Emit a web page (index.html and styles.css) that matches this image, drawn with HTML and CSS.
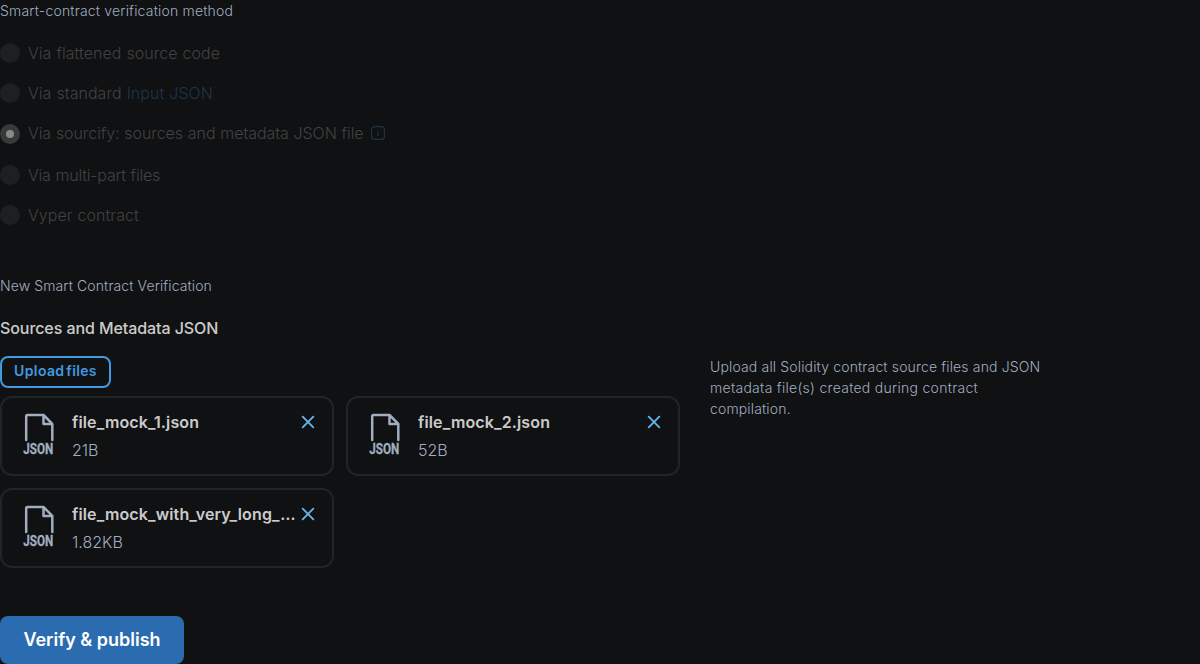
FILE: index.html
```html
<!DOCTYPE html>
<html lang="en">
<head>
<meta charset="utf-8">
<title>New Smart Contract Verification</title>
<link rel="stylesheet" href="styles.css">
</head>
<body>
<svg class="sprite" aria-hidden="true">
  <symbol id="json" viewBox="0 0 40 48">
    <path d="M6.200 32V8.300Q6.200 7 7.500 7H23.500L32.300 15.800V32M23.500 7.500V16H32" fill="none" stroke="currentColor" stroke-width="2.500" stroke-linecap="round" stroke-linejoin="round"/>
    <text class="json-text" x="3.200" y="46" textLength="30" lengthAdjust="spacingAndGlyphs">JSON</text>
  </symbol>
  <symbol id="cross" viewBox="0 0 20 20">
    <path d="M4.700 4.700L15.300 15.300M15.300 4.700L4.700 15.300" fill="none" stroke="currentColor" stroke-width="1.900" stroke-linecap="round"/>
  </symbol>
</svg>
<form class="page">
  <div class="caption">Smart-contract verification method</div>
  <div class="methods">
    <div class="method"><span class="radio"></span><span class="label">Via flattened source code</span></div>
    <div class="method"><span class="radio"></span><span class="label">Via standard <span class="link">Input JSON</span></span></div>
    <div class="method info-row"><span class="radio checked"></span><span class="label">Via sourcify: sources and metadata JSON file</span>
      <svg class="info" viewBox="0 0 14 14"><rect x=".6" y=".6" width="12.800" height="12.800" rx="3" fill="none" stroke="currentColor" stroke-width="1.200"/><path d="M7 4.200V5.200M7 6.200V10" stroke="currentColor" stroke-width="1.100"/></svg>
    </div>
    <div class="method"><span class="radio"></span><span class="label tight">Via multi-part files</span></div>
    <div class="method"><span class="radio"></span><span class="label">Vyper contract</span></div>
  </div>
  <div class="caption section">New Smart Contract Verification</div>
  <div class="heading">Sources and Metadata JSON</div>
  <div class="columns">
    <div class="files-col">
      <button type="button" class="upload">Upload files</button>
      <div class="files">
        <div class="file"><svg class="file-icon"><use href="#json"/></svg><div class="file-body"><div class="file-head"><span class="name">file_mock_1.json</span><svg class="close"><use href="#cross"/></svg></div><div class="size">21B</div></div></div>
        <div class="file"><svg class="file-icon"><use href="#json"/></svg><div class="file-body"><div class="file-head"><span class="name">file_mock_2.json</span><svg class="close"><use href="#cross"/></svg></div><div class="size">52B</div></div></div>
        <div class="file"><svg class="file-icon"><use href="#json"/></svg><div class="file-body"><div class="file-head"><span class="name">file_mock_with_very_long_name.json</span><svg class="close"><use href="#cross"/></svg></div><div class="size">1.82KB</div></div></div>
      </div>
    </div>
    <p class="hint">Upload all Solidity contract source files and JSON <span class="loose">metadata file(s) created during contract</span> compilation.</p>
  </div>
  <button type="button" class="submit">Verify &amp; publish</button>
</form>
</body>
</html>
```
FILE: styles.css
```css
* { box-sizing: border-box; }
body {
  margin: 0;
  background: #101112;
  color: rgba(255, 255, 255, .8);
  font: 400 16px/24px Inter, sans-serif;
}
.sprite { display: none; }
.caption { font-size: 14px; line-height: 21px; color: #a0aec0; letter-spacing: .19px; font-weight: 350; }
.methods { display: flex; flex-direction: column; gap: 16px; margin-top: 20px; }
.method { display: flex; align-items: center; height: 24px; }
.radio {
  width: 20px;
  height: 20px;
  margin-right: 8px;
  border-radius: 50%;
  background: #1e1f20;
}
.radio.checked { border: 6px solid #383939; background: #888988; }
.label { color: #414243; font-weight: 300; letter-spacing: .05px; word-spacing: .4px; }
.link { color: #1d364a; }
.info-row { height: 26px; }
.info-row .label { height: 26px; letter-spacing: -.07px; }
.label.tight { letter-spacing: -.2px; }
.info { width: 14px; height: 14px; margin: 0 0 2px 7px; color: #1b3347; }
.section { margin-top: 48px; letter-spacing: .11px; }
.heading { margin-top: 20px; font-weight: 500; letter-spacing: -.08px; }
.columns { display: grid; grid-template-columns: 680px 340px; column-gap: 30px; margin-top: 16px; }
.upload {
  display: block;
  width: 111px;
  height: 32px;
  padding: 0 0 2px;
  border: 2px solid #4299e1;
  border-radius: 8px;
  background: none;
  color: #4299e1;
  font: 600 14px/20px Inter, sans-serif;
  letter-spacing: .36px;
  word-spacing: -2px;
}
.files { display: grid; grid-template-columns: 334px 334px; gap: 12px; margin-top: 8px; }
.file {
  display: flex;
  height: 80px;
  padding: 10px 14px 10px 18px;
  border: 2px solid #222324;
  border-radius: 12px;
}
.file-icon { flex: none; width: 40px; height: 48px; margin-right: 12px; color: #a0aec0; }
.json-text { font: 700 15px "Roboto", sans-serif; fill: currentColor; stroke: currentColor; stroke-width: .3px; }
.file-body { flex: 1; min-width: 0; }
.file-head { display: flex; align-items: center; height: 28px; }
.name {
  flex: 1;
  min-width: 0;
  overflow: hidden;
  text-overflow: ellipsis;
  white-space: nowrap;
  font-weight: 600;
  letter-spacing: .14px;
}
.close { flex: none; width: 20px; height: 20px; margin-left: 2px; color: #63b3ed; }
.size { line-height: 28px; color: #a0aec0; font-weight: 300; }
.hint { margin: 0; font-size: 14px; line-height: 21px; color: #a0aec0; font-weight: 350; letter-spacing: .15px; }
.loose { letter-spacing: .28px; }
.submit {
  display: block;
  width: 184px;
  height: 48px;
  margin-top: 48px;
  padding: 0;
  border: 0;
  border-radius: 8px;
  background: #2b6cb0;
  color: #fff;
  font: 600 18px/22px Inter, sans-serif;
}
```
